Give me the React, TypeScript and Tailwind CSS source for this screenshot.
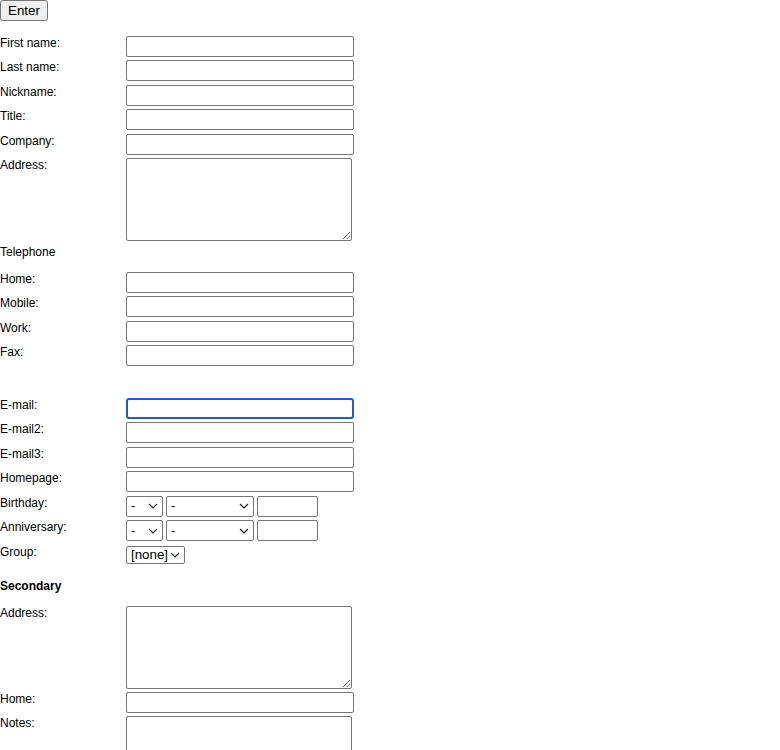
import type { ReactNode } from 'react';

const inputCls =
  'block h-[21px] w-[228px] rounded-[2px] border border-[#767676] bg-white px-[2px] text-[13.33px] outline-none';

function Row({ label, children }: { label: string; children: ReactNode }) {
  return (
    <div className="flex items-start">
      <label className="w-[126px] shrink-0 text-[12px] leading-[14px]">{label}</label>
      {children}
    </div>
  );
}

function Field({ label, focused }: { label: string; focused?: boolean }) {
  return (
    <Row label={label}>
      <input
        type="text"
        className={
          focused
            ? 'block h-[21px] w-[228px] rounded-[3px] border-2 border-[#1f5fc4] bg-white px-[2px] text-[13.33px] outline-none'
            : inputCls
        }
      />
    </Row>
  );
}

function Area({ label }: { label: string }) {
  return (
    <Row label={label}>
      <textarea className="block h-[83px] w-[226px] rounded-[2px] border border-[#767676] bg-white p-[2px] text-[13.33px] outline-none" />
    </Row>
  );
}

function Chevron() {
  return (
    <svg width="10" height="6" viewBox="0 0 10 6" className="shrink-0">
      <path d="M1 1l4 4 4-4" fill="none" stroke="#222" strokeWidth="1.2" />
    </svg>
  );
}

function FakeSelect({ text, width, height = 21 }: { text: string; width: string; height?: number }) {
  return (
    <div
      className={`flex items-center justify-between rounded-[2px] border border-[#767676] bg-white pl-[4px] pr-[4px] text-[13.33px] leading-none ${width}`}
      style={{ height }}
    >
      <span>{text}</span>
      <Chevron />
    </div>
  );
}

function DateRow({ label }: { label: string }) {
  return (
    <Row label={label}>
      <div className="flex gap-[3px]">
        <FakeSelect text="-" width="w-[37px]" />
        <FakeSelect text="-" width="w-[88px]" />
        <input type="text" className="block h-[21px] w-[61px] rounded-[2px] border border-[#767676] bg-white text-[13.33px] outline-none" />
      </div>
    </Row>
  );
}

export default function App() {
  return (
    <div className="min-h-[750px] bg-white font-['Liberation_Sans',Arial,sans-serif] text-black">
      <button
        type="button"
        className="block h-[21px] rounded-[3px] border border-[#767676] bg-[#efefef] px-[7px] text-[13.33px] leading-none"
      >
        Enter
      </button>

      <div className="mt-[15px] flex flex-col gap-[3.4px]">
        <Field label="First name:" />
        <Field label="Last name:" />
        <Field label="Nickname:" />
        <Field label="Title:" />
        <Field label="Company:" />
        <Area label="Address:" />
      </div>

      <div className="mt-[4px] mb-[13px] text-[12px] leading-[14px]">Telephone</div>

      <div className="flex flex-col gap-[3.4px]">
        <Field label="Home:" />
        <Field label="Mobile:" />
        <Field label="Work:" />
        <Field label="Fax:" />
      </div>

      <div className="mt-[31.5px] flex flex-col gap-[3.5px]">
        <Field label="E-mail:" focused />
        <Field label="E-mail2:" />
        <Field label="E-mail3:" />
        <Field label="Homepage:" />
        <DateRow label="Birthday:" />
        <DateRow label="Anniversary:" />
        <Row label="Group:">
          <div className="mt-[1px]">
            <FakeSelect text="[none]" width="w-[59px]" height={18} />
          </div>
        </Row>
      </div>

      <div className="mt-[15px] mb-[13px] text-[12px] font-bold leading-[14px]">Secondary</div>

      <div className="flex flex-col gap-[3px]">
        <Area label="Address:" />
        <Field label="Home:" />
        <Area label="Notes:" />
      </div>
    </div>
  );
}
